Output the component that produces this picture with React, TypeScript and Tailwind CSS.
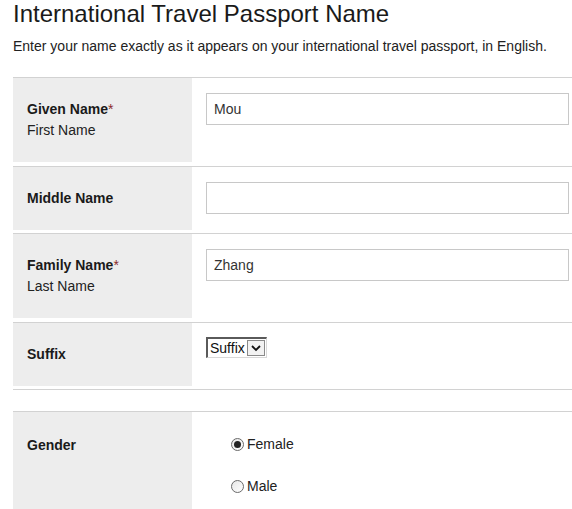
import React from "react";

function Label({ title, sub, required }: { title: string; sub?: string; required?: boolean }) {
  return (
    <div className="flex flex-col justify-center">
      <div className="font-bold text-[#1a1a1a]">
        {title}
        {required && <span className="font-normal text-[#8b2a2a]">*</span>}
      </div>
      {sub && <div className="text-[#222]">{sub}</div>}
    </div>
  );
}

function TextInput({ value }: { value: string }) {
  return (
    <div className="w-[363px] h-[32px] border border-[#c8c8c8] bg-white flex items-center pl-[7px] text-[14px] text-[#333]">
      {value}
    </div>
  );
}

function Radio({ checked, label }: { checked?: boolean; label: string }) {
  return (
    <div className="flex items-center h-[21px]">
      <span className="w-[13px] h-[13px] rounded-full border border-[#6a6a6a] bg-gradient-to-br from-[#e6e6e6] to-white flex items-center justify-center">
        {checked && <span className="w-[7px] h-[7px] rounded-full bg-[#222]" />}
      </span>
      <span className="ml-[3px] text-[14px] text-[#222]">{label}</span>
    </div>
  );
}

export default function App() {
  return (
    <div className="w-[572px] h-[509px] overflow-hidden bg-white font-['Liberation_Sans',Arial,sans-serif] text-[#222]">
      <div className="pl-[13px]">
        <h1 className="text-[24px] leading-[28px] text-[#1a1a1a]">International Travel Passport Name</h1>
        <p className="mt-[8px] text-[14px] leading-[20px] text-[#222]">
          Enter your name exactly as it appears on your international travel passport, in English.
        </p>

        <div className="mt-[21px] text-[14px] leading-[21px]">
          {/* Given Name */}
          <div className="flex border-t border-[#d2d2d2] pb-[4px]">
            <div className="w-[179px] bg-[#ededed] py-[21px] pl-[14px]">
              <Label title="Given Name" sub="First Name" required />
            </div>
            <div className="flex-1 pl-[14px] pt-[15px]">
              <TextInput value="Mou" />
            </div>
          </div>

          {/* Middle Name */}
          <div className="flex border-t border-[#d2d2d2] pb-[3px]">
            <div className="w-[179px] bg-[#ededed] py-[21px] pl-[14px]">
              <Label title="Middle Name" />
            </div>
            <div className="flex-1 pl-[14px] pt-[15px]">
              <TextInput value="" />
            </div>
          </div>

          {/* Family Name */}
          <div className="flex border-t border-[#d2d2d2] pb-[4px]">
            <div className="w-[179px] bg-[#ededed] py-[21px] pl-[14px]">
              <Label title="Family Name" sub="Last Name" required />
            </div>
            <div className="flex-1 pl-[14px] pt-[15px]">
              <TextInput value="Zhang" />
            </div>
          </div>

          {/* Suffix */}
          <div className="flex border-t border-[#d2d2d2] pb-[3px]">
            <div className="w-[179px] bg-[#ededed] py-[21px] pl-[14px]">
              <Label title="Suffix" />
            </div>
            <div className="flex-1 pl-[14px] pt-[14px]">
              <div className="inline-flex items-center h-[21px] w-[61px] border-t-2 border-l-2 border-r border-b border-t-[#5a5a5a] border-l-[#5a5a5a] border-r-[#d8d8d8] border-b-[#d8d8d8] bg-white">
                <span className="pl-[2px] text-[14px] leading-[17px] text-[#111]">Suffix</span>
                <span className="ml-auto mr-[1px] w-[18px] h-[16px] border border-[#8a8a8a] bg-[#f2f2f2] flex items-center justify-center">
                  <svg width="10" height="7" viewBox="0 0 10 7">
                    <polyline points="1,1 5,5 9,1" fill="none" stroke="#111" strokeWidth="1.8" />
                  </svg>
                </span>
              </div>
            </div>
          </div>

          {/* Spacer */}
          <div className="h-[22px] border-t border-[#d2d2d2]" />

          {/* Gender */}
          <div className="flex border-t border-[#d2d2d2]">
            <div className="w-[179px] h-[140px] bg-[#ededed] pt-[23px] pl-[14px]">
              <Label title="Gender" />
            </div>
            <div className="flex-1 pl-[39px] pt-[22px] flex flex-col gap-[21px]">
              <Radio checked label="Female" />
              <Radio label="Male" />
            </div>
          </div>
        </div>
      </div>
    </div>
  );
}
